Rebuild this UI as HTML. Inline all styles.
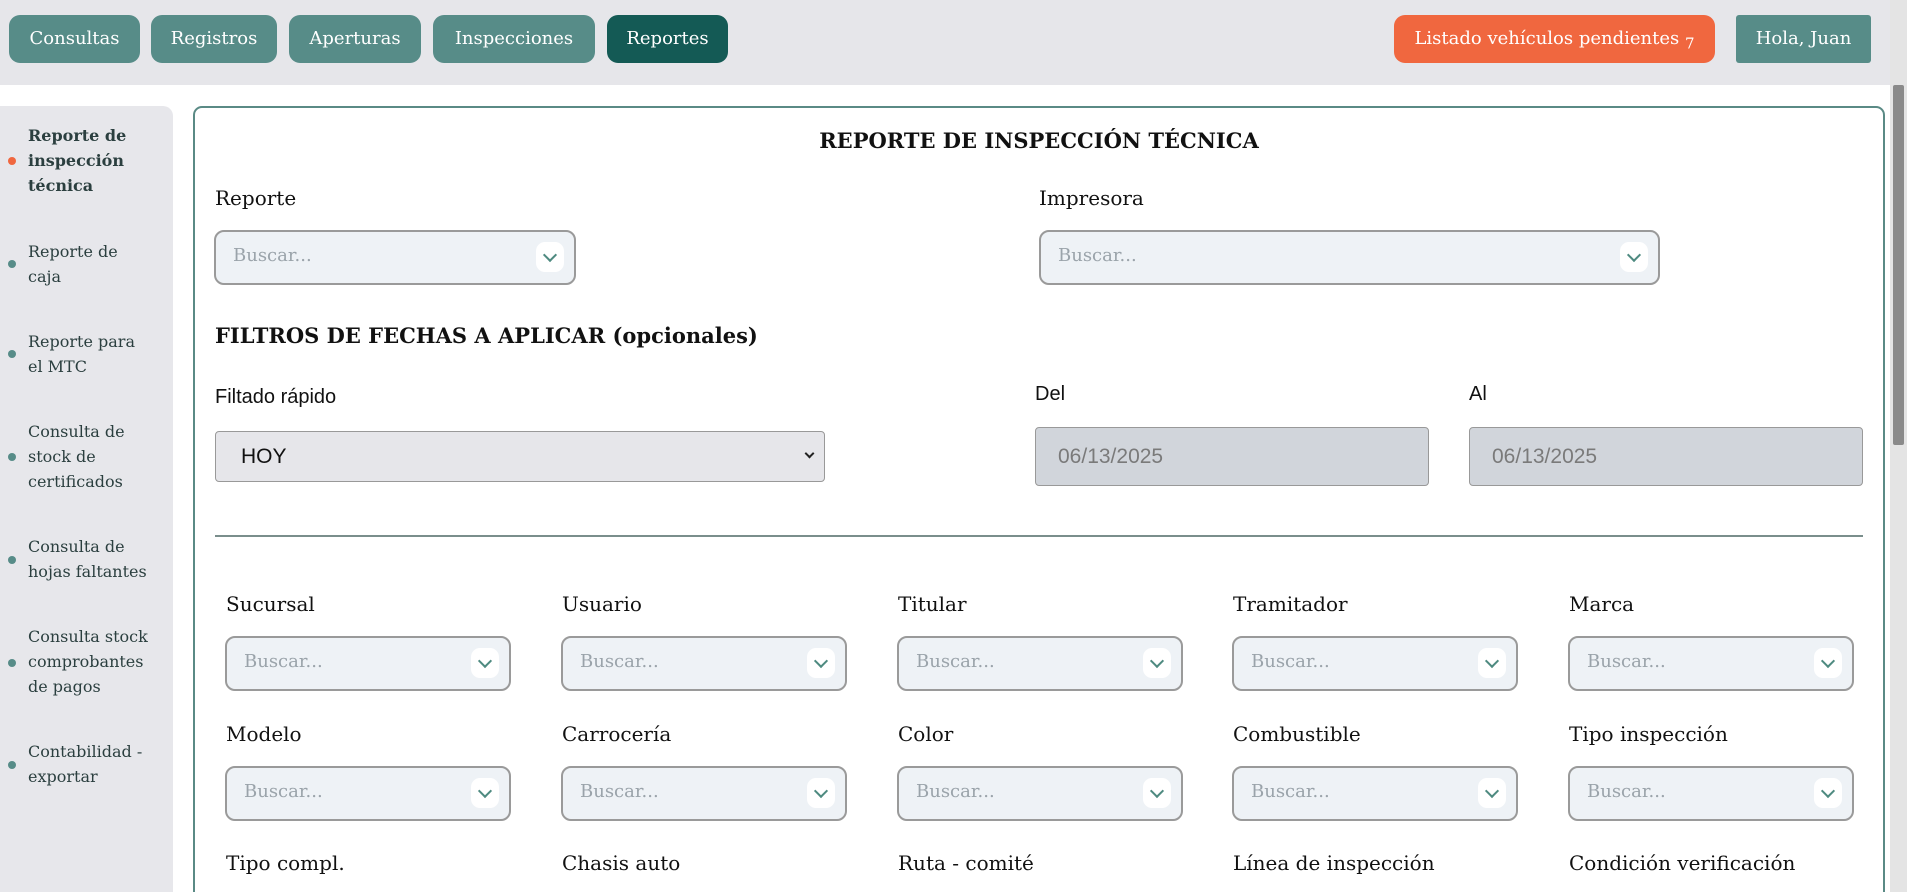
<!DOCTYPE html>
<html><head><meta charset="utf-8"><style>
*{box-sizing:border-box;margin:0;padding:0}
html,body{width:1907px;height:892px;overflow:hidden}
body{background:#fff;font-family:"DejaVu Serif",serif;position:relative;color:#111}
.a{position:absolute}
.top{left:0;top:0;width:1890px;height:85px;background:#e6e6ea}
.nb{position:absolute;top:15px;height:48px;border-radius:11px;background:#578c88;color:#fff;font-size:18px;line-height:48px;text-align:center;white-space:nowrap}
.side{left:0;top:106px;width:173px;height:800px;background:#e7e7eb;border-top-right-radius:10px}
.si{position:absolute;left:28px;font-size:16px;line-height:25px;color:#2b3f3f;white-space:nowrap}
.dot{position:absolute;left:8px;width:8px;height:8px;border-radius:50%;background:#578c88}
.card{left:193px;top:106px;width:1692px;height:820px;border:2px solid #5a8a85;border-radius:9px}
.lbl{position:absolute;font-size:20px;color:#111;white-space:nowrap}
.sel{position:absolute;height:55px;border:2.5px solid #9a9a9a;border-radius:10px;background:#eef2f6}
.sel span{position:absolute;left:17px;top:13px;font-size:18px;color:#9aa3aa}
.sel i{position:absolute;right:10px;top:10px;width:28px;height:30px;background:#fff;border-radius:9px}
.sel i:after{content:"";position:absolute;left:9px;top:8px;width:8px;height:8px;border-right:2px solid #4e8a80;border-bottom:2px solid #4e8a80;transform:rotate(45deg)}
.inp{position:absolute;height:59px;background:#d1d5db;border:1.5px solid #999;border-radius:4px;font-family:"Liberation Sans",sans-serif;font-size:21px;color:#7a7a7a;padding:17px 0 0 22px}
</style></head><body>
<div class="a top"></div>
<div class="nb" style="left:9px;width:131px">Consultas</div>
<div class="nb" style="left:151px;width:126px">Registros</div>
<div class="nb" style="left:289px;width:132px">Aperturas</div>
<div class="nb" style="left:433px;width:162px">Inspecciones</div>
<div class="nb" style="left:607px;width:121px;background:#145a55">Reportes</div>
<div class="nb" style="left:1394px;width:321px;background:#f0673f">Listado vehículos pendientes <sub style="font-size:15px">7</sub></div>
<div class="nb" style="left:1736px;width:135px;border-radius:3px">Hola, Juan</div>
<div class="a" style="left:1890px;top:0;width:17px;height:892px;background:#e4e4e4"></div>
<div class="a" style="left:1893px;top:85px;width:11px;height:360px;background:#8a8a8a;border-radius:2px"></div>

<div class="a side"></div>
<div class="dot" style="top:157px;background:#f0673f"></div>
<div class="si" style="top:123px;font-weight:bold">Reporte de<br>inspección<br>técnica</div>
<div class="dot" style="top:260px"></div>
<div class="si" style="top:239px">Reporte de<br>caja</div>
<div class="dot" style="top:350px"></div>
<div class="si" style="top:329px">Reporte para<br>el MTC</div>
<div class="dot" style="top:453px"></div>
<div class="si" style="top:419px">Consulta de<br>stock de<br>certificados</div>
<div class="dot" style="top:556px"></div>
<div class="si" style="top:534px">Consulta de<br>hojas faltantes</div>
<div class="dot" style="top:659px"></div>
<div class="si" style="top:624px">Consulta stock<br>comprobantes<br>de pagos</div>
<div class="dot" style="top:761px"></div>
<div class="si" style="top:739px">Contabilidad -<br>exportar</div>

<div class="a card"></div>
<div class="a" style="left:193px;width:1692px;top:128px;text-align:center;font-weight:bold;font-size:21px">REPORTE DE INSPECCIÓN TÉCNICA</div>
<div class="lbl" style="left:215px;top:186px">Reporte</div>
<div class="sel" style="left:214px;top:230px;width:362px"><span>Buscar...</span><i></i></div>
<div class="lbl" style="left:1039px;top:186px">Impresora</div>
<div class="sel" style="left:1039px;top:230px;width:621px"><span>Buscar...</span><i></i></div>
<div class="a" style="left:215px;top:323px;font-weight:bold;font-size:21px">FILTROS DE FECHAS A APLICAR (opcionales)</div>
<div class="lbl" style="left:215px;top:386px;font-family:'Liberation Sans',sans-serif;font-size:20px">Filtado rápido</div>
<div class="a" style="left:215px;top:431px;width:610px;height:51px;background:#e6e6ea;border:1.5px solid #999;border-radius:4px;font-family:'Liberation Sans',sans-serif;font-size:21px;padding:13px 0 0 25px">HOY<span style="position:absolute;right:11px;top:18px;width:7px;height:7px;border-right:2px solid #222;border-bottom:2px solid #222;transform:rotate(45deg)"></span></div>
<div class="lbl" style="left:1035px;top:383px;font-family:'Liberation Sans',sans-serif;font-size:20px">Del</div>
<div class="inp" style="left:1035px;top:427px;width:394px">06/13/2025</div>
<div class="lbl" style="left:1469px;top:383px;font-family:'Liberation Sans',sans-serif;font-size:20px">Al</div>
<div class="inp" style="left:1469px;top:427px;width:394px">06/13/2025</div>
<div class="a" style="left:215px;top:535px;width:1648px;height:2px;background:#7a8e8c"></div>

<div class="lbl" style="left:226px;top:592px">Sucursal</div>
<div class="lbl" style="left:562px;top:592px">Usuario</div>
<div class="lbl" style="left:898px;top:592px">Titular</div>
<div class="lbl" style="left:1233px;top:592px">Tramitador</div>
<div class="lbl" style="left:1569px;top:592px">Marca</div>
<div class="sel" style="left:225px;top:636px;width:286px"><span>Buscar...</span><i></i></div>
<div class="sel" style="left:561px;top:636px;width:286px"><span>Buscar...</span><i></i></div>
<div class="sel" style="left:897px;top:636px;width:286px"><span>Buscar...</span><i></i></div>
<div class="sel" style="left:1232px;top:636px;width:286px"><span>Buscar...</span><i></i></div>
<div class="sel" style="left:1568px;top:636px;width:286px"><span>Buscar...</span><i></i></div>

<div class="lbl" style="left:226px;top:722px">Modelo</div>
<div class="lbl" style="left:562px;top:722px">Carrocería</div>
<div class="lbl" style="left:898px;top:722px">Color</div>
<div class="lbl" style="left:1233px;top:722px">Combustible</div>
<div class="lbl" style="left:1569px;top:722px">Tipo inspección</div>
<div class="sel" style="left:225px;top:766px;width:286px"><span>Buscar...</span><i></i></div>
<div class="sel" style="left:561px;top:766px;width:286px"><span>Buscar...</span><i></i></div>
<div class="sel" style="left:897px;top:766px;width:286px"><span>Buscar...</span><i></i></div>
<div class="sel" style="left:1232px;top:766px;width:286px"><span>Buscar...</span><i></i></div>
<div class="sel" style="left:1568px;top:766px;width:286px"><span>Buscar...</span><i></i></div>

<div class="lbl" style="left:226px;top:851px">Tipo compl.</div>
<div class="lbl" style="left:562px;top:851px">Chasis auto</div>
<div class="lbl" style="left:898px;top:851px">Ruta - comité</div>
<div class="lbl" style="left:1233px;top:851px">Línea de inspección</div>
<div class="lbl" style="left:1569px;top:851px">Condición verificación</div>
</body></html>
